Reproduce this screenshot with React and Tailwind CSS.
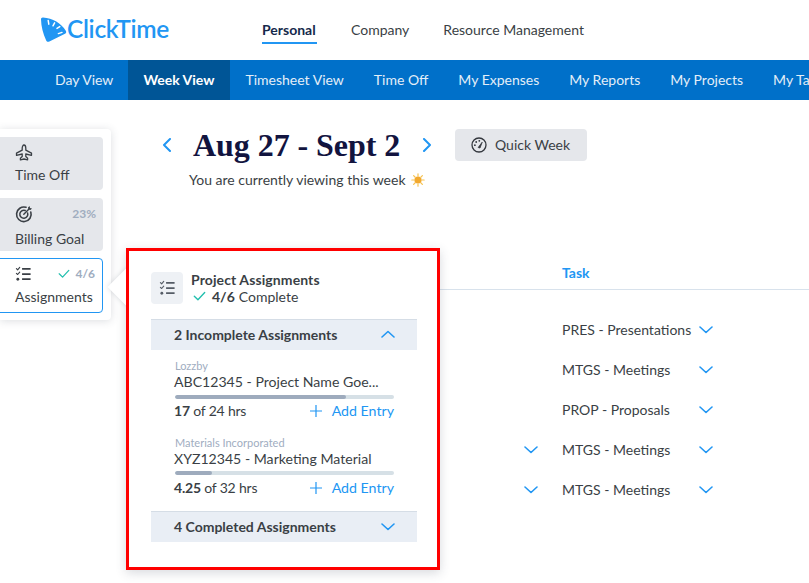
import React from "react";

const Chev = ({ up, className = "" }) => (
  <svg width="14" height="8" viewBox="0 0 14 8" fill="none" className={className}>
    <path d={up ? "M1 7L7 1.5L13 7" : "M1 1L7 6.5L13 1"} stroke="#2196f3" strokeWidth="1.6" strokeLinecap="round" strokeLinejoin="round" />
  </svg>
);

const Checks = ({ color = "#3a3f45", size = 18 }) => (
  <svg width={size} height={size} viewBox="0 0 18 18" fill="none">
    <path d="M1.5 2.8L2.8 4L5 1.5M1.5 7.8L2.8 9L5 6.5" stroke={color} strokeWidth="1.2" strokeLinecap="round" strokeLinejoin="round" />
    <circle cx="3" cy="14" r="1.5" fill={color} />
    <path d="M7.5 3H16.5M7.5 8.5H16.5M7.5 14H16.5" stroke={color} strokeWidth="1.8" />
  </svg>
);

const Tick = ({ className = "", w = 12 }) => (
  <svg width={w} height={w * 0.8} viewBox="0 0 12 10" fill="none" className={className}>
    <path d="M1 5L4.5 8.5L11 1.5" stroke="#22bfae" strokeWidth="1.3" strokeLinecap="round" strokeLinejoin="round" />
  </svg>
);

const Plane = () => (
  <svg width="18" height="18" viewBox="0 0 18 18" fill="none">
    <path d="M9 1C10 1 10.8 2.6 10.8 4.2V6.2L16.5 9.2V11.3L10.8 10V12.6L12.6 14.2V15.8L9 15L5.4 15.8V14.2L7.2 12.6V10L1.5 11.3V9.2L7.2 6.2V4.2C7.2 2.6 8 1 9 1Z" stroke="#3a3f45" strokeWidth="1.3" strokeLinejoin="round" />
  </svg>
);

const Goal = () => (
  <svg width="18" height="18" viewBox="0 0 18 18" fill="none">
    <path d="M11 2.3A7.3 7.3 0 1 0 15.8 7" stroke="#3a3f45" strokeWidth="1.6" strokeLinecap="round" />
    <path d="M10.2 5.5A4 4 0 1 0 12.6 8" stroke="#3a3f45" strokeWidth="1.5" strokeLinecap="round" />
    <path d="M8.8 9.2L14 4" stroke="#3a3f45" strokeWidth="1.4" strokeLinecap="round" />
    <path d="M13 2.5L13.4 4.6L15.5 5L17 3.4L15 3L14.6 1Z" fill="#3a3f45" />
  </svg>
);

const Gauge = () => (
  <svg width="16" height="16" viewBox="0 0 16 16" fill="none">
    <circle cx="8" cy="8" r="7" stroke="#33373d" strokeWidth="1.3" />
    <path d="M7.2 10.5L11.2 5.2L9 11Z" fill="#33373d" stroke="#33373d" strokeWidth="0.8" strokeLinejoin="round" />
    <circle cx="3.9" cy="8.2" r="0.9" fill="#33373d" />
    <circle cx="5.2" cy="5" r="0.9" fill="#33373d" />
    <circle cx="8.3" cy="3.8" r="0.9" fill="#33373d" />
  </svg>
);

const Sun = () => (
  <svg width="14" height="14" viewBox="0 0 14 14">
    <g stroke="#f6c453" strokeWidth="1.2" strokeLinecap="round">
      <path d="M7 .8V3M7 11V13.2M.8 7H3M11 7H13.2M2.6 2.6L4 4M10 10L11.4 11.4M2.6 11.4L4 10M10 4L11.4 2.6" />
    </g>
    <circle cx="7" cy="7" r="3.6" fill="#f2a92e" />
  </svg>
);

const Logo = () => (
  <svg width="27" height="26" viewBox="0 0 27 26">
    <path d="M1 2.2C1 1 1.8 .3 3 .4C12.5 1.2 21.5 6 25.8 13.8C26.6 15.2 26.2 16.2 25 16.8L9.4 24.4C7.9 25.1 6.8 24.8 6.2 23.4C3 16.4 1.2 9.6 1 2.2Z" fill="#2196f3" />
    <path d="M8.2 3.5L8.8 7.2M14.6 5.8L13 8.8M19.8 9.6L17 11.4M22 15.4L18.4 16.6" stroke="#fff" strokeWidth="1.5" strokeLinecap="round" />
  </svg>
);

const tabs = ["Day View", "Week View", "Timesheet View", "Time Off", "My Expenses", "My Reports", "My Projects", "My Tasks"];
const tasks = [
  ["PRES - Presentations", false],
  ["MTGS - Meetings", false],
  ["PROP - Proposals", false],
  ["MTGS - Meetings", true],
  ["MTGS - Meetings", true],
];

const Entry = ({ client, name, done, total, pct, mt, barMt, rowMt }) => (
  <div className={`${mt} pl-[23px] pr-[23px]`}>
    <div className="text-[11px] leading-[14px] pl-[1px] text-[#a0adbf]">{client}</div>
    <div className="text-[14.1px] leading-[18px] text-[#3a3f45] whitespace-nowrap">{name}</div>
    <div className={`${barMt} ml-[1px] h-[4px] rounded-full bg-[#d6e0e6] overflow-hidden`}>
      <div className="h-full rounded-full bg-[#9eabbd]" style={{ width: pct + "%" }} />
    </div>
    <div className={`${rowMt} flex items-center justify-between text-[14px] leading-[20px]`}>
      <span className="text-[#3a3f45] tracking-[-0.2px]"><b className="font-bold">{done}</b> of {total} hrs</span>
      <span className="flex items-center text-[#2196f3] text-[14.2px]">
        <svg width="12" height="12" viewBox="0 0 12 12" className="mr-[10px]"><path d="M6 0V12M0 6H12" stroke="#2196f3" strokeWidth="1.2" /></svg>
        Add Entry
      </span>
    </div>
  </div>
);

const RailItem = ({ icon, label, right, active, labelMt }) => (
  <div className={`w-[111px] -ml-[8px] pr-[7px] rounded-[4px] ${active ? "-mt-[1px] h-[55px] bg-white border border-[#2196f3] pl-[22px] pt-[6px]" : "h-[53px] bg-[#e5e7eb] pl-[23px] pt-[7px]"}`}>
    <div className="flex items-center justify-between h-[18px]">
      {icon}
      {right}
    </div>
    <div className={`${labelMt} text-[14px] leading-[20px] text-[#3a3f45] whitespace-nowrap`}>{label}</div>
  </div>
);

export default function App() {
  return (
    <div className="relative w-[809px] h-[583px] overflow-hidden bg-white font-['Lato','Open_Sans',sans-serif]">
      <header className="h-[60px] flex items-center pb-[1px]">
        <div className="w-[262px] pl-[40px] flex items-center shrink-0">
          <Logo />
          <span className="text-[24.5px] leading-none font-semibold text-[#2196f3] tracking-[-0.3px]">ClickTime</span>
        </div>
        <nav className="flex gap-[34px] text-[14px] text-[#3a3f45]">
          <span className="relative w-[55px] font-bold text-[#15294b]">
            Personal
            <span className="absolute left-0 right-0 -bottom-[4px] h-[2px] bg-[#2196f3]" />
          </span>
          <span>Company</span>
          <span>Resource Management</span>
        </nav>
      </header>

      <div className="h-10 bg-[#0070c9] pl-[40px] flex whitespace-nowrap overflow-hidden">
        {tabs.map((t, i) => (
          <div key={t} className={`h-10 pl-[15px] pb-[1px] flex items-center text-[14px] ${i === 1 ? "pr-[16px] bg-[#005596] text-white font-bold" : "pr-[15px] text-[#e3eef8]"}`}>{t}</div>
        ))}
      </div>

      <div className="flex">
        <aside className="mt-[29px] w-[111px] h-[191px] shrink-0 bg-white rounded-r-[4px] shadow-[0_1px_8px_rgba(60,70,90,0.18)] pt-[8px] flex flex-col gap-[8px] relative">
          <RailItem labelMt="mt-[3px]" icon={<Plane />} label="Time Off" />
          <RailItem labelMt="mt-[6px]" icon={<Goal />} label="Billing Goal" right={<span className="text-[12px] font-bold text-[#a0adbf]">23%</span>} />
          <RailItem labelMt="mt-[4px]" active icon={<Checks size={17} />} label="Assignments" right={<span className="flex items-center gap-[5px] text-[12px] font-bold text-[#a0adbf]"><Tick />4/6</span>} />
        </aside>

        <main className="flex-1 min-w-0">
          <div className="mt-[29px] ml-[50px] flex items-center h-[32px]">
            <svg width="10" height="14" viewBox="0 0 10 14" fill="none" className="mr-[22px] ml-[1px]"><path d="M8 1L2 7L8 13" stroke="#2196f3" strokeWidth="2" strokeLinecap="round" strokeLinejoin="round" /></svg>
            <h1 className="font-['Liberation_Serif',serif] font-bold text-[32px] leading-[32px] tracking-[-0.05px] text-[#12143f] whitespace-nowrap w-[208px] -ml-[1px]">Aug 27 - Sept 2</h1>
            <svg width="10" height="14" viewBox="0 0 10 14" fill="none" className="ml-[21px]"><path d="M2 1L8 7L2 13" stroke="#2196f3" strokeWidth="2" strokeLinecap="round" strokeLinejoin="round" /></svg>
            <button className="ml-[23px] h-[32px] w-[132px] rounded-[4px] bg-[#e5e7eb] flex items-center pl-[16px] gap-[8px] text-[14px] text-[#3a3f45]">
              <Gauge /><span className="pb-[1px]">Quick Week</span>
            </button>
          </div>
          <div className="mt-[11px] ml-[78px] flex items-center gap-[5px] text-[14px] leading-[16px] text-[#3a3f45] whitespace-nowrap">
            You are currently viewing this week <Sun />
          </div>

          <div className="mt-[73px] h-[29px] border-b border-[#d8e2ec] pl-[451px] flex items-start">
            <span className="text-[14px] leading-[20px] font-bold text-[#2196f3] mt-[2px]">Task</span>
          </div>
          <div className="mt-[19px]">
            {tasks.map(([t, left], i) => (
              <div key={i} className="h-10 flex items-center relative pl-[451px] text-[14px] text-[#3a3f45]">
                {left && <Chev className="absolute left-[413px] top-[17px]" />}
                <span className="w-[137px] whitespace-nowrap">{t}</span>
                <Chev className="mt-[2px]" />
              </div>
            ))}
          </div>
        </main>
      </div>

      <section className="absolute left-[126px] top-[248px] w-[314px] h-[322px] bg-white border-[3px] border-[#ff0000] shadow-[0_3px_10px_rgba(60,70,90,0.2)] pt-[21px] pl-[22px]">
        <div className="flex items-center h-[32px]">
          <div className="w-[32px] h-[32px] rounded-[4px] bg-[#eef1f5] flex items-center justify-center shrink-0">
            <Checks color="#555c66" size={17} />
          </div>
          <div className="ml-[8px]">
            <div className="text-[14px] leading-[17px] font-bold text-[#3a3f45] tracking-[0.1px]">Project Assignments</div>
            <div className="flex items-center text-[14px] leading-[18px] text-[#3a3f45]">
              <Tick className="ml-[2px] mr-[6px]" w={13} />
              <b className="font-bold mr-[4px]">4/6</b>Complete
            </div>
          </div>
        </div>

        <div className="mt-[15px] w-[266px] h-[31px] bg-[#e9eef5] border-t border-[#d5dde6] pl-[23px] pr-[22px] pb-[2px] flex items-center justify-between">
          <span className="text-[14px] font-bold text-[#3a3f45]">2 Incomplete Assignments</span>
          <Chev up />
        </div>

        <div className="w-[266px]">
          <Entry mt="mt-[9px]" barMt="mt-[4px]" rowMt="mt-[2px]" client="Lozzby" name="ABC12345 - Project Name Goe..." done="17" total="24" pct={78} />
          <Entry mt="mt-[15px]" barMt="mt-[3px]" rowMt="mt-[3px]" client="Materials Incorporated" name="XYZ12345 - Marketing Material" done="4.25" total="32" pct={17} />
        </div>

        <div className="mt-[13px] w-[266px] h-[31px] bg-[#e9eef5] border-t border-[#d5dde6] pl-[23px] pr-[22px] pb-[1px] flex items-center justify-between">
          <span className="text-[14px] font-bold text-[#3a3f45]">4 Completed Assignments</span>
          <Chev />
        </div>
      </section>

      <div className="absolute left-[104px] top-[265px] w-[22px] h-[44px] overflow-hidden">
        <div className="absolute left-[9px] top-[9px] w-[26px] h-[26px] rotate-45 bg-white shadow-[0_0_5px_rgba(60,70,90,0.18)]" />
      </div>
    </div>
  );
}
